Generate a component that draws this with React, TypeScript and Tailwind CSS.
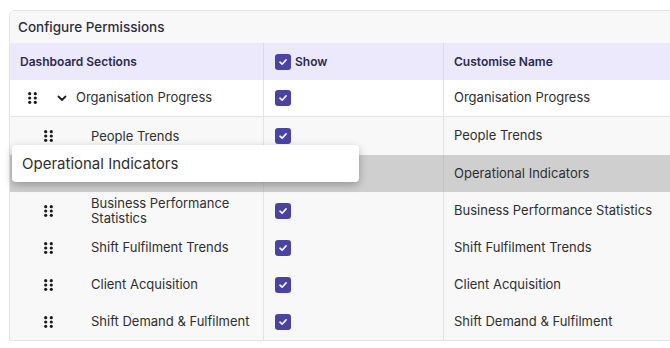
import React from "react";

const Dots = () => (
  <svg width="9" height="12" viewBox="0 0 9 12" className="shrink-0">
    {[1.7, 6, 10.3].map((y) =>
      [1.7, 7.3].map((x) => <circle key={`${x}-${y}`} cx={x} cy={y} r="1.6" fill="#1a1a1a" />)
    )}
  </svg>
);

const Check = () => (
  <div className="w-[16px] h-[16px] rounded-[3px] bg-[#4b42a8] flex items-center justify-center">
    <svg width="10" height="10" viewBox="0 0 10 10">
      <path d="M2 5.2 L4.1 7.2 L8.1 2.9" stroke="white" strokeWidth="1.6" fill="none" strokeLinecap="round" strokeLinejoin="round" />
    </svg>
  </div>
);

type Row = { name: string; h: string; parent?: boolean; dragging?: boolean };

const rows: Row[] = [
  { name: "Organisation Progress", h: "h-[37px]", parent: true },
  { name: "People Trends", h: "h-[38px]" },
  { name: "Operational Indicators", h: "h-[37px]", dragging: true },
  { name: "Business Performance Statistics", h: "h-[37px]" },
  { name: "Shift Fulfilment Trends", h: "h-[37px]" },
  { name: "Client Acquisition", h: "h-[37px]" },
  { name: "Shift Demand & Fulfilment", h: "h-[37px]" },
];

export default function App() {
  return (
    <div
      className="relative w-[670px] h-[348px] bg-white overflow-hidden"
      style={{ fontFamily: "Inter, 'Open Sans', sans-serif" }}
    >
      <div className="ml-[9px] mt-[10px] w-[720px] border border-[#e3e3e3] rounded-tl-[6px] overflow-hidden">
        <div className="h-[32px] bg-[#f8f8f9] flex items-center pl-[8px] pt-[1px] text-[13.5px] font-medium text-[#2e2d3f]">
          Configure Permissions
        </div>
        <div className="h-[37px] bg-[#ebe9fb] grid grid-cols-[254px_180px_1fr] text-[12px] font-semibold text-[#2c2a4d]">
          <div className="flex items-center pl-[10px] border-r border-[#dcdaea]">Dashboard Sections</div>
          <div className="flex items-center pl-[11px] gap-[4px] border-r border-[#dcdaea]">
            <Check />
            <span>Show</span>
          </div>
          <div className="flex items-center pl-[10px]">Customise Name</div>
        </div>
        {rows.map((r) => (
          <div
            key={r.name}
            className={`${r.h} grid grid-cols-[254px_180px_1fr] text-[13px] text-[#2f2f2f] ${
              r.dragging ? "bg-[#cfcfcf]" : r.parent ? "bg-white border-b border-[#e6e6e6]" : "bg-[#f8f8f8]"
            }`}
          >
            <div className={`flex items-center border-r ${r.dragging ? "border-[#c4c4c4]" : "border-[#e3e3e3]"}`}>
              {r.parent ? (
                <div className="flex items-center pl-[18px]">
                  <Dots />
                  <svg width="10" height="7" viewBox="0 0 10 7" className="ml-[20px]">
                    <path d="M1.5 1.5 L5 5 L8.5 1.5" stroke="#1f1f1f" strokeWidth="1.8" fill="none" strokeLinecap="round" strokeLinejoin="round" />
                  </svg>
                  <span className="ml-[9px]">{r.name}</span>
                </div>
              ) : (
                <div className="flex items-center pl-[34px]">
                  <Dots />
                  {!r.dragging && <span className="ml-[38px] w-[165px] leading-[15px]">{r.name}</span>}
                </div>
              )}
            </div>
            <div className={`flex items-center pl-[11px] border-r ${r.dragging ? "border-[#c4c4c4]" : "border-[#e3e3e3]"}`}>
              {!r.dragging && <Check />}
            </div>
            <div className="flex items-center pl-[10px]">{r.name}</div>
          </div>
        ))}
      </div>
      <div className="absolute left-[12px] top-[145px] w-[347px] h-[37px] bg-white rounded-[4px] shadow-[0_3px_8px_rgba(0,0,0,0.28)] flex items-center pl-[10px] pt-[1px] text-[15px] text-[#2f2f2f]">
        Operational Indicators
      </div>
    </div>
  );
}
